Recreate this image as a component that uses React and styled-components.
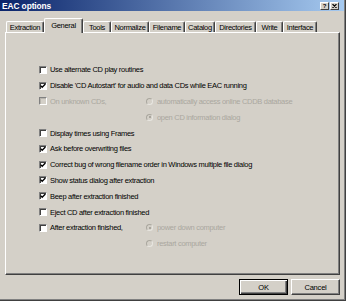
import React from "react";
import styled, { createGlobalStyle, css } from "styled-components";

const Global = createGlobalStyle`
  html, body { margin: 0; padding: 0; background: #d4d0c8; }
  * { box-sizing: border-box; }
`;

const Window = styled.div`
  width: 346px;
  height: 301px;
  background: #d4d0c8;
  border-right: 1px solid #404040;
  border-bottom: 1px solid #404040;
  box-shadow: inset -1px -1px 0 #808080;
  font-family: "Liberation Sans", Arial, sans-serif;
  font-size: 7.5px;
  color: #000;
  display: flex;
  flex-direction: column;
  overflow: hidden;
`;

const TitleBar = styled.div`
  height: 11px;
  margin-right: 1px;
  background: linear-gradient(to right, #0a246a, #a6caf0);
  display: flex;
  align-items: center;
  justify-content: space-between;
  padding: 0 5px 0 2px;
`;

const Title = styled.span`
  color: #fff;
  font-weight: bold;
  font-size: 8.4px;
  letter-spacing: -0.1px;
`;

const CaptionGroup = styled.div`
  display: flex;
  gap: 1px;
`;

const CaptionButton = styled.div`
  width: 9px;
  height: 8px;
  background: #d4d0c8;
  border-top: 1px solid #fff;
  border-left: 1px solid #fff;
  border-right: 1px solid #404040;
  border-bottom: 1px solid #404040;
  display: flex;
  align-items: center;
  justify-content: center;
  font-weight: bold;
  font-size: 6px;
  line-height: 1;
`;

const Body = styled.div`
  flex: 1;
  display: flex;
  flex-direction: column;
  padding: 7px 5px 0 5px;
`;

const TabStrip = styled.div`
  display: flex;
  align-items: flex-end;
  height: 14px;
  padding-left: 1px;
  position: relative;
  z-index: 1;
`;

const Tab = styled.div`
  height: 11px;
  border-top: 1px solid #fff;
  border-left: 1px solid #fff;
  border-right: 1px solid #404040;
  box-shadow: inset -1px 0 0 #808080;
  border-radius: 2px 2px 0 0;
  display: flex;
  align-items: center;
  justify-content: center;
  white-space: nowrap;
  letter-spacing: -0.3px;
  background: #d4d0c8;
  ${(p) =>
    p.$active &&
    css`
      height: 15px;
      margin-bottom: -1px;
      padding-bottom: 2px;
    `}
`;

const Panel = styled.div`
  height: 243px;
  border-top: 1px solid #fff;
  border-left: 1px solid #fff;
  border-right: 1px solid #404040;
  border-bottom: 1px solid #404040;
  box-shadow: inset -1px -1px 0 #808080;
  padding: 29px 0 0 33px;
`;

const OptionGrid = styled.div`
  display: grid;
  grid-template-columns: 107px 1fr;
  grid-auto-rows: 15.8px;
`;

const Cell = styled.div`
  display: flex;
  align-items: center;
  gap: 3px;
  white-space: nowrap;
  letter-spacing: -0.3px;
  color: ${(p) => (p.$disabled ? "#aaa79f" : "#000")};
  ${(p) => p.$span && css`grid-column: 1 / -1;`}
  ${(p) => p.$right && css`grid-column: 2;`}
`;

const Box = styled.span`
  width: 8px;
  height: 8px;
  flex: none;
  background: ${(p) => (p.$disabled ? "#d4d0c8" : "#fff")};
  border-top: 1px solid #808080;
  border-left: 1px solid #808080;
  border-right: 1px solid #fff;
  border-bottom: 1px solid #fff;
  box-shadow: inset 1px 1px 0 ${(p) => (p.$disabled ? "#b8b5ae" : "#404040")};
  display: flex;
  align-items: center;
  justify-content: center;
`;

const Radio = styled.span`
  width: 7px;
  height: 7px;
  flex: none;
  border-radius: 50%;
  border: 1px solid #aaa79f;
  border-right-color: #e8e6e1;
  border-bottom-color: #e8e6e1;
  background: #d4d0c8;
  display: flex;
  align-items: center;
  justify-content: center;
  margin-right: 1px;
  &::after {
    content: "";
    width: 2px;
    height: 2px;
    border-radius: 50%;
    background: ${(p) => (p.$on ? "#9a978f" : "transparent")};
  }
`;

const ButtonRow = styled.div`
  display: flex;
  justify-content: flex-end;
  gap: 3px;
  margin-top: 4px;
`;

const PushButton = styled.div`
  width: 49px;
  height: 16px;
  display: flex;
  align-items: center;
  justify-content: center;
  letter-spacing: -0.2px;
  border-top: 1px solid #fff;
  border-left: 1px solid #fff;
  border-right: 1px solid #404040;
  border-bottom: 1px solid #404040;
  box-shadow: inset -1px -1px 0 #808080;
  ${(p) =>
    p.$default &&
    css`
      border: 1px solid #000;
      box-shadow: inset 1px 1px 0 #fff, inset -1px -1px 0 #404040,
        inset -2px -2px 0 #808080;
    `}
`;

const Check = () => (
  <svg width="6" height="6" viewBox="0 0 6 6">
    <path d="M0.6 2.6 L2.2 4.3 L5.4 1" fill="none" stroke="#000" strokeWidth="1.3" />
  </svg>
);

const CheckRow = ({ checked, disabled, children, span = true }) => (
  <Cell $span={span} $disabled={disabled}>
    <Box $disabled={disabled}>{checked && <Check />}</Box>
    {children}
  </Cell>
);

const RadioRow = ({ on, children }) => (
  <Cell $right $disabled>
    <Radio $on={on} />
    {children}
  </Cell>
);

const tabs = [
  ["Extraction", 38],
  ["General", 39, true],
  ["Tools", 28],
  ["Normalize", 38],
  ["Filename", 36],
  ["Catalog", 30],
  ["Directories", 41],
  ["Write", 27],
  ["Interface", 34],
];

export default function App() {
  return (
    <>
      <Global />
      <Window>
        <TitleBar>
          <Title>EAC options</Title>
          <CaptionGroup>
            <CaptionButton>?</CaptionButton>
            <CaptionButton>
              <svg width="5" height="4" viewBox="0 0 5 4">
                <path d="M0.5 0 L4.5 4 M4.5 0 L0.5 4" stroke="#000" strokeWidth="1.1" />
              </svg>
            </CaptionButton>
          </CaptionGroup>
        </TitleBar>
        <Body>
          <TabStrip>
            {tabs.map(([label, w, active]) => (
              <Tab key={label} $active={active} style={{ width: w }}>
                {label}
              </Tab>
            ))}
          </TabStrip>
          <Panel>
            <OptionGrid>
              <CheckRow>Use alternate CD play routines</CheckRow>
              <CheckRow checked>Disable 'CD Autostart' for audio and data CDs while EAC running</CheckRow>
              <CheckRow disabled span={false}>On unknown CDs,</CheckRow>
              <RadioRow>automatically access online CDDB database</RadioRow>
              <RadioRow on>open CD information dialog</RadioRow>
              <CheckRow>Display times using Frames</CheckRow>
              <CheckRow checked>Ask before overwriting files</CheckRow>
              <CheckRow checked>Correct bug of wrong filename order in Windows multiple file dialog</CheckRow>
              <CheckRow checked>Show status dialog after extraction</CheckRow>
              <CheckRow checked>Beep after extraction finished</CheckRow>
              <CheckRow>Eject CD after extraction finished</CheckRow>
              <CheckRow span={false}>After extraction finished,</CheckRow>
              <RadioRow on>power down computer</RadioRow>
              <RadioRow>restart computer</RadioRow>
            </OptionGrid>
          </Panel>
          <ButtonRow>
            <PushButton $default>OK</PushButton>
            <PushButton>Cancel</PushButton>
          </ButtonRow>
        </Body>
      </Window>
    </>
  );
}
